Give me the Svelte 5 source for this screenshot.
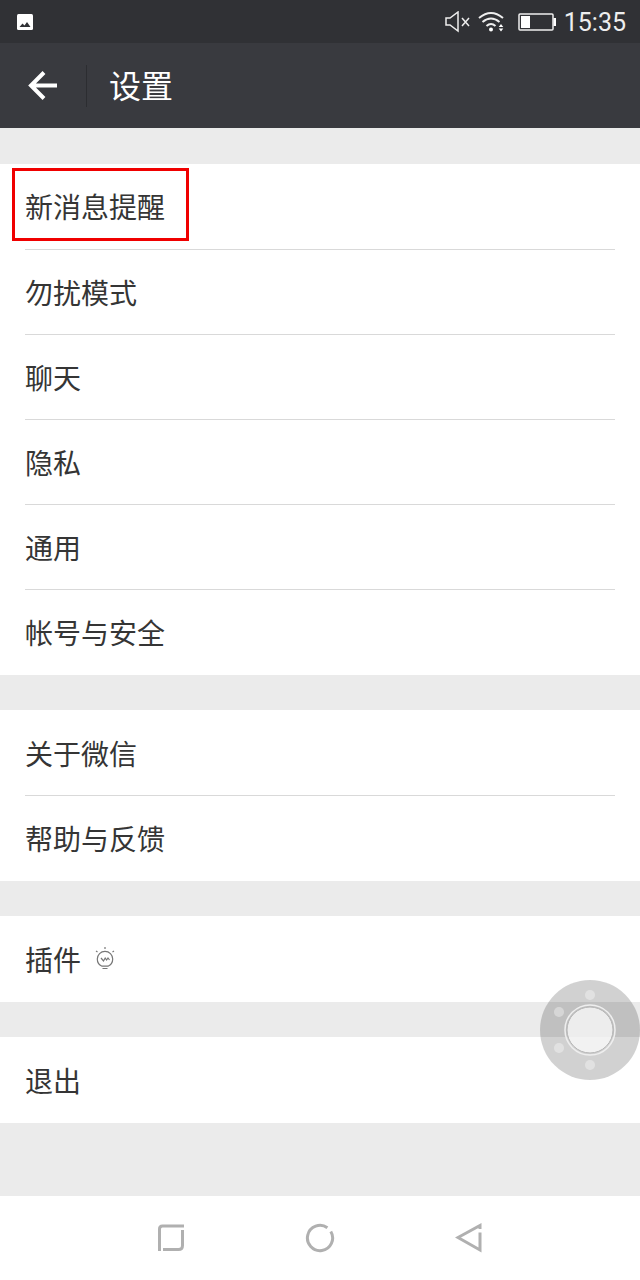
<script lang="ts">
  interface Item {
    label: string;
    highlighted?: boolean;
    bulb?: boolean;
  }

  const groups: Item[][] = [
    [
      { label: '新消息提醒', highlighted: true },
      { label: '勿扰模式' },
      { label: '聊天' },
      { label: '隐私' },
      { label: '通用' },
      { label: '帐号与安全' },
    ],
    [{ label: '关于微信' }, { label: '帮助与反馈' }],
    [{ label: '插件', bulb: true }],
    [{ label: '退出' }],
  ];
</script>

<div class="screen">
  <div class="status-bar">
    <svg width="16" height="16" viewBox="0 0 16 16" aria-hidden="true">
      <rect width="16" height="16" rx="1.500" fill="#fff" />
      <path d="M2.500 13 5.500 9.500l2 2L10 8l3.500 5z" fill="#303135" />
    </svg>
    <div class="status-icons">
      <svg class="mute" width="25" height="22" viewBox="0 0 25 22" aria-hidden="true">
        <path d="M1 7h4l8-6v19l-8-6H1z" />
        <path d="m17 7 7 8M24 7l-7 8" />
      </svg>
      <svg class="wifi" width="28" height="22" viewBox="0 0 28 22" aria-hidden="true">
        <path d="M1 7q12-10 24 0M4.500 11q8.500-7 17 0M8.500 15q4.500-4 9 0" />
        <circle cx="13" cy="18.500" r="2" />
        <path class="solid" d="m23 13 2.300 3h-4.600zM23 20.500l2.300-3h-4.600z" />
      </svg>
      <svg class="battery" width="38" height="18" viewBox="0 0 38 18" aria-hidden="true">
        <rect x="1" y="1" width="34" height="16" rx="1" />
        <path class="solid" d="M3 3h9v12H3zM35.500 5H38v8h-2.500z" />
      </svg>
      <span class="time">15:35</span>
    </div>
  </div>

  <header>
    <button class="back" aria-label="返回">
      <svg width="30" height="30" viewBox="0 0 30 30" aria-hidden="true">
        <path d="M29 14.500H3M16 1.500l-13 13 13 13" />
      </svg>
    </button>
    <h1>设置</h1>
  </header>

  <main>
    {#each groups as group}
      <ul>
        {#each group as item}
          <li>
            <button class="row" class:highlighted={item.highlighted}>
              <span>{item.label}</span>
              {#if item.bulb}
                <svg width="20" height="24" viewBox="0 0 20 24" aria-hidden="true">
                  <path d="M7 19.200C4 18 2.300 15.500 2.300 12a7.700 7.700 0 0 1 15.400 0c0 3.500-1.700 6-4.700 7.200zM7.500 21.500h5" />
                  <path d="m6 11 2.500 3 1.700-3 1.400 2 1.400-2 1.500 2M10 0v2M1 4l1.500 1M19 4l-1.500 1" />
                </svg>
              {/if}
            </button>
          </li>
        {/each}
      </ul>
    {/each}
  </main>

  <nav>
    <button aria-label="最近任务">
      <svg width="28" height="28" viewBox="0 0 28 28" aria-hidden="true">
        <path d="M2.500 27V5q0-3 3-3H27M6 25.500h15.500q4 0 4-4V6" />
      </svg>
    </button>
    <button aria-label="主页">
      <svg width="30" height="30" viewBox="0 0 30 30" aria-hidden="true">
        <path d="M25.800 8.500a12.600 12.600 0 1 1-3.400-3.700" />
      </svg>
    </button>
    <button aria-label="后退">
      <svg width="28" height="30" viewBox="0 0 28 30" aria-hidden="true">
        <path d="M25 6V2.500L3 14.500 25 27V9.500" />
      </svg>
    </button>
  </nav>

  <button class="assistive" aria-label="悬浮球">
    <svg width="100" height="100" viewBox="0 0 100 100" aria-hidden="true">
      <circle cx="50" cy="50" r="50" fill="#000" fill-opacity="0.18" />
      <g fill="#fff" fill-opacity="0.35">
        <circle cx="50" cy="15" r="5" />
        <circle cx="50" cy="85" r="5" />
        <circle cx="19" cy="32" r="5" />
        <circle cx="19" cy="68" r="5" />
      </g>
      <circle cx="50" cy="50" r="23" fill="#fff" fill-opacity="0.7" />
      <circle cx="50" cy="50" r="23" fill="none" stroke="#b4b4b4" />
      <circle cx="50" cy="50" r="25" fill="none" stroke="#eee" stroke-width="1.500" />
    </svg>
  </button>
</div>

<style>
  :global(body) {
    margin: 0;
  }

  .screen {
    display: flex;
    flex-direction: column;
    min-height: 100vh;
    background: #ebebeb;
    color: #353535;
    font-family: 'Noto Sans CJK SC', sans-serif;
  }

  button {
    display: flex;
    align-items: center;
    padding: 0;
    border: 0;
    background: none;
    color: inherit;
    font: inherit;
    cursor: pointer;
  }

  .status-bar {
    display: flex;
    align-items: center;
    justify-content: space-between;
    height: 43px;
    padding: 0 14px 0 17px;
    background: #303135;
  }

  .status-icons {
    display: flex;
    align-items: center;
    gap: 8px;
    fill: none;
    stroke: #eee;
  }

  .mute,
  .battery {
    stroke-width: 1.5;
  }

  .wifi {
    stroke-width: 2;
  }

  .wifi circle,
  .solid {
    fill: #fff;
    stroke: none;
  }

  .battery {
    margin-left: 4px;
  }

  .time {
    padding-top: 2px;
    color: #eee;
    font: 25px/41px Roboto, sans-serif;
  }

  header {
    display: flex;
    align-items: center;
    height: 85px;
    background: #393a3f;
    color: #fff;
  }

  .back {
    justify-content: center;
    width: 87px;
    height: 42px;
    border-right: 1px solid #2c2d31;
  }

  .back svg {
    fill: none;
    stroke: #fff;
    stroke-width: 4;
  }

  h1 {
    margin: 0 0 0 22px;
    padding-bottom: 4px;
    font-size: 32px;
    font-weight: 400;
    line-height: 48px;
  }

  main {
    display: flex;
    flex: 1;
    flex-direction: column;
    gap: 35px;
    padding: 36px 0;
  }

  ul {
    margin: 0;
    padding: 0 25px 1px;
    background: #fff;
    list-style: none;
  }

  li + li {
    border-top: 1px solid #d9d9d9;
  }

  li {
    display: flex;
    align-items: center;
    box-sizing: border-box;
    height: 85px;
  }

  .row {
    flex: 1;
    gap: 14px;
    height: 72px;
    font-size: 28px;
    text-align: left;
  }

  .row svg {
    fill: none;
    stroke: #777;
    stroke-width: 1.2;
  }

  .highlighted {
    box-sizing: border-box;
    flex: none;
    align-self: flex-start;
    height: 73px;
    margin: 4px 0 0 -13px;
    padding: 2px 21px 0 10px;
    border: 3px solid #f00000;
  }

  nav {
    display: flex;
    align-items: center;
    justify-content: center;
    gap: 120px;
    height: 84px;
    background: #fff;
  }

  nav svg {
    fill: none;
    stroke: #b0b0b0;
    stroke-width: 3;
  }

  .assistive {
    position: fixed;
    right: 0;
    bottom: 200px;
  }
</style>
